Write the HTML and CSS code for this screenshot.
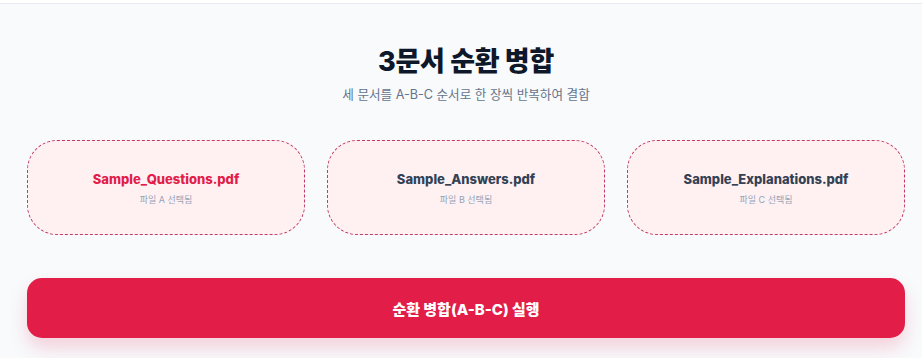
FILE: index.html
```html
<!DOCTYPE html>
<html lang="ko">
<head>
    <meta charset="UTF-8">
    <meta name="viewport" content="width=device-width, initial-scale=1.0">
    <title>3문서 순환 병합</title>
    <link rel="stylesheet" href="styles.css">
</head>
<body>
    <div class="topbar"></div>
    <div class="container">
        <div class="header">
            <h1>3문서 순환 병합</h1>
            <p class="subtitle">세 문서를 A-B-C 순서로 한 장씩 반복하여 결합</p>
        </div>
        <div class="files">
            <div class="file-card active">
                <div class="file-name">Sample_Questions.pdf</div>
                <div class="file-label">파일 A 선택됨</div>
            </div>
            <div class="file-card">
                <div class="file-name">Sample_Answers.pdf</div>
                <div class="file-label">파일 B 선택됨</div>
            </div>
            <div class="file-card">
                <div class="file-name">Sample_Explanations.pdf</div>
                <div class="file-label">파일 C 선택됨</div>
            </div>
        </div>
        <button class="run-btn">순환 병합(A-B-C) 실행</button>
    </div>
</body>
</html>
```

FILE: styles.css
```css
* {
    box-sizing: border-box;
}
html, body {
    margin: 0;
    padding: 0;
}
body {
    font-family: Inter, "Noto Sans CJK KR", sans-serif;
    background: #f8fafc;
    color: #0f172a;
    height: 358px;
    overflow: hidden;
}
.topbar {
    height: 4px;
    background: #fff;
    border-bottom: 1px solid #e8ecf1;
}
.container {
    padding: 0 17px 0 27px;
}
.header {
    text-align: center;
    padding-top: 41px;
}
h1 {
    margin: 0;
    font-size: 27px;
    font-weight: 800;
    line-height: 34px;
    letter-spacing: -0.3px;
    color: #0f172a;
}
.subtitle {
    margin: 7px 0 0;
    font-size: 12.6px;
    line-height: 18px;
    color: #64748b;
}
.files {
    display: grid;
    grid-template-columns: repeat(3, 1fr);
    gap: 22px;
    margin-top: 36px;
}
.file-card {
    height: 95px;
    background: #fff1f2;
    border: 1px dashed #c23a66;
    border-radius: 30px;
    display: flex;
    flex-direction: column;
    align-items: center;
    justify-content: center;
}
.file-name {
    font-size: 13px;
    font-weight: 800;
    line-height: 18px;
    color: #334155;
}
.file-card.active .file-name {
    color: #e11d48;
}
.file-label {
    margin-top: 6px;
    font-size: 9px;
    line-height: 12px;
    color: #94a3b8;
}
.run-btn {
    display: block;
    width: 100%;
    height: 60px;
    margin-top: 43px;
    border: none;
    border-radius: 15px;
    background: #e11d48;
    color: #fff;
    font-family: Inter, "Noto Sans CJK KR", sans-serif;
    font-size: 15px;
    font-weight: 800;
    box-shadow: 0 10px 18px rgba(225, 29, 72, 0.18);
    cursor: pointer;
}
```
